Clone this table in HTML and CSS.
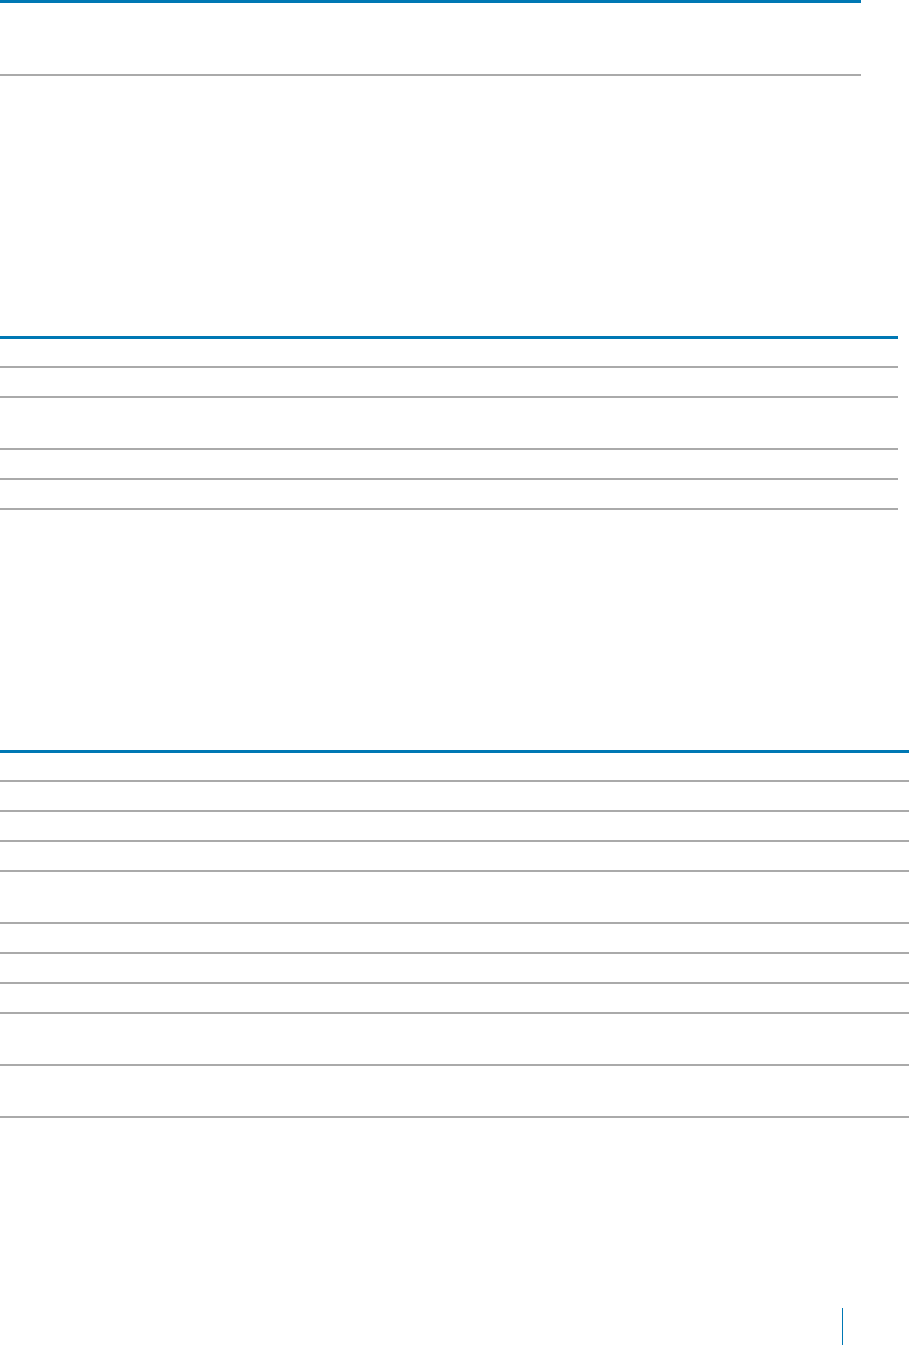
FILE: index.html
```html
<!DOCTYPE html>
<html lang="en">
<head>
<meta charset="utf-8">
<title>Document page</title>
<link rel="stylesheet" href="styles.css">
</head>
<body>
<div class="page">
  <section class="block block-head">
    <div class="row row-head"></div>
  </section>

  <section class="block block-mid">
    <div class="row first"></div>
    <div class="row"></div>
    <div class="row tall"></div>
    <div class="row"></div>
    <div class="row"></div>
  </section>

  <section class="block block-wide">
    <div class="row first"></div>
    <div class="row"></div>
    <div class="row"></div>
    <div class="row"></div>
    <div class="row tall"></div>
    <div class="row"></div>
    <div class="row"></div>
    <div class="row"></div>
    <div class="row tall"></div>
    <div class="row tall"></div>
  </section>

  <footer class="foot">
    <div class="foot-rule"></div>
  </footer>
</div>
</body>
</html>
```

FILE: styles.css
```css
html, body {
  margin: 0;
  padding: 0;
  background: #ffffff;
  font-family: "Liberation Sans", Arial, sans-serif;
}

.page {
  display: flex;
  flex-direction: column;
  width: 909px;
}

.block {
  display: flex;
  flex-direction: column;
  border-top: 3px solid #0078b4;
}

.row {
  height: 28px;
  border-bottom: 2px solid #aaaaaa;
}

.row.first {
  height: 27px;
}

.row.tall {
  height: 50px;
}

.block-head {
  width: 861px;
}

.row-head {
  height: 71px;
}

.block-mid {
  width: 898px;
  margin-top: 260px;
}

.block-wide {
  width: 909px;
  margin-top: 240px;
}

.foot {
  display: flex;
  margin-top: 190px;
  height: 37px;
}

.foot-rule {
  width: 1px;
  margin-left: 842px;
  background: #0078b4;
}
```
